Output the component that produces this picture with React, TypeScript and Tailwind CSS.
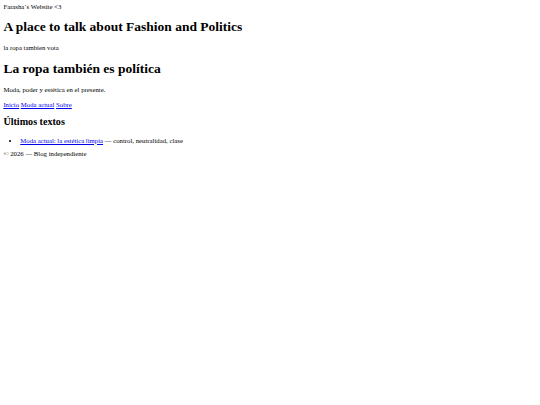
export default function App() {
  const posts = [
    { title: "Moda actual: la estética limpia", note: "control, neutralidad, clase" },
  ]

  return (
    <div className="min-h-screen bg-white p-[3.375px] font-['Liberation_Serif','Times_New_Roman',serif] text-[6.75px] leading-[normal] text-black">
      <div>Farasha´s Website &lt;3</div>

      <h1 className="my-[9.05px] text-[13.5px] font-bold">A place to talk about Fashion and Politics</h1>
      <p className="my-[6.75px]">la ropa tambien vota</p>

      <h1 className="my-[9.05px] text-[13.5px] font-bold">La ropa también es política</h1>
      <p className="my-[6.75px]">Moda, poder y estética en el presente.</p>

      <nav className="mt-[8.5px] mb-[6.75px]">
        <a href="#" className="text-[#0000ee] underline">Inicio</a>{" "}
        <a href="#" className="text-[#0000ee] underline">Moda actual</a>{" "}
        <a href="#" className="text-[#0000ee] underline">Sobre</a>
      </nav>

      <h2 className="my-[8.4px] text-[10.125px] font-bold">Últimos textos</h2>
      <ul className="mt-[9.4px] mb-[6.5px] list-disc pl-[16.875px]">
        {posts.map(post => (
          <li key={post.title}>
            <a href="#" className="text-[#0000ee] underline">{post.title}</a> — {post.note}
          </li>
        ))}
      </ul>

      <footer className="mt-[6.5px]">© 2026 — Blog independiente</footer>
    </div>
  )
}
